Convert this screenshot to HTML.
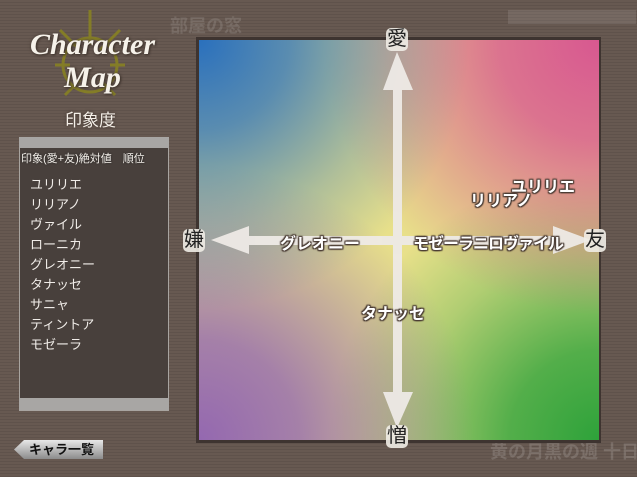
<!DOCTYPE html>
<html><head><meta charset="utf-8"><style>
body{margin:0;width:637px;height:477px;overflow:hidden;position:relative;font-family:"Liberation Sans","Noto Sans CJK JP",sans-serif;
background:#675951;background-image:repeating-linear-gradient(0deg,rgba(0,0,0,.08) 0 1px,transparent 1px 3px);}
.abs{position:absolute}
.title{color:#f6f2ea;font-family:"Liberation Serif",serif;font-weight:bold;text-align:center;text-shadow:0 0 3px #4a3e36,1px 1px 2px #3a302a}
.chart{left:196px;top:37px;width:405px;height:406px;background:#3e3430}
.grad{left:199px;top:40px;width:400px;height:400px;
background:radial-gradient(circle 300px at 0 0,#2a70bd 0,rgba(42,112,189,.75) 90px,rgba(42,112,189,.3) 190px,rgba(42,112,189,0) 270px),
radial-gradient(circle 300px at 100% 0,#d85890 0,rgba(216,88,144,.8) 100px,rgba(216,88,144,.35) 200px,rgba(216,88,144,0) 275px),
radial-gradient(circle 300px at 0 100%,#9468b0 0,rgba(148,104,176,.8) 100px,rgba(148,104,176,.35) 200px,rgba(148,104,176,0) 275px),
radial-gradient(circle 300px at 100% 100%,#2ea23a 0,rgba(46,162,58,.8) 90px,rgba(46,162,58,.3) 190px,rgba(46,162,58,0) 270px),#e8e08a}
.lbl{font-weight:bold;font-size:16px;color:#fff;text-shadow:0 0 2px #4a3c34,0 0 2px #4a3c34,1px 1px 1px #4a3c34,-1px -1px 1px #4a3c34,1px -1px 1px #4a3c34,-1px 1px 1px #4a3c34;white-space:nowrap}
.ax{font-size:20px;color:#222;background:rgba(240,236,230,.9);border-radius:5px;padding:0 1px;line-height:23px}
.list div{color:#f0ece8;font-size:13px;height:20px}
</style></head><body>
<div class="abs" style="left:170px;top:12px;color:rgba(255,255,255,.12);font-size:18px;font-weight:bold">部屋の窓</div>
<div class="abs" style="left:508px;top:10px;width:128px;height:14px;background:rgba(255,255,255,.1);"></div>
<div class="abs" style="left:490px;top:438px;color:rgba(255,255,255,.15);font-size:18px;font-weight:bold;white-space:nowrap">黄の月黒の週 十日</div>
<svg class="abs" style="left:30px;top:5px" width="110" height="110" viewBox="0 0 110 110"><g fill="none" stroke="#8a8420" stroke-width="3" opacity=".85"><circle cx="60" cy="60" r="27"/><path d="M60 5 L60 40 M30 25 L50 45 M90 25 L70 45 M25 60 L40 60 M95 60 L80 60 M35 90 L50 75 M85 90 L70 75"/></g></svg>
<div class="abs title" style="left:20px;top:28px;width:145px;font-size:30px;line-height:33px;font-style:italic">Character<br>Map</div>
<div class="abs" style="left:65px;top:106px;color:#f4efe8;font-size:17px;text-shadow:0 0 3px #3a2e28">印象度</div>
<div class="abs" style="left:19px;top:137px;width:150px;height:274px;background:#48403c;border:1px solid #a8a4a0;box-sizing:border-box"></div>
<div class="abs" style="left:19px;top:137px;width:150px;height:11px;background:#a8a6a4"></div>
<div class="abs" style="left:19px;top:398px;width:150px;height:12px;background:#a8a6a4"></div>
<div class="abs" style="left:21px;top:150px;color:#f4f0ea;font-size:11px;text-shadow:0 0 2px #222">印象(愛+友)絶対値　順位</div>
<div class="abs list" style="left:30px;top:174px"><div>ユリリエ</div><div>リリアノ</div><div>ヴァイル</div><div>ローニカ</div><div>グレオニー</div><div>タナッセ</div><div>サニャ</div><div>ティントア</div><div>モゼーラ</div></div>
<div class="abs" style="left:14px;top:440px;width:89px;height:19px;background:linear-gradient(#e8e8e8,#8c8c8c);clip-path:polygon(10px 0,100% 0,100% 100%,10px 100%,0 50%);font-weight:bold;font-size:13px;color:#111;text-align:center;line-height:19px;padding-left:6px;box-sizing:border-box">キャラ一覧</div>
<div class="abs chart"></div>
<div class="abs grad"></div>
<svg class="abs" style="left:199px;top:40px" width="400" height="400"><g fill="#eeeae6" opacity=".95">
<rect x="194" y="48" width="9" height="310"/><rect x="48" y="196" width="310" height="9"/>
<polygon points="198,12 184,50 214,50"/><polygon points="198,388 184,352 214,352"/>
<polygon points="12,200 50,186 50,214"/><polygon points="392,200 354,186 354,214"/></g></svg>
<div class="abs ax" style="left:386px;top:28px">愛</div>
<div class="abs ax" style="left:386px;top:425px">憎</div>
<div class="abs ax" style="left:183px;top:229px">嫌</div>
<div class="abs ax" style="left:584px;top:229px">友</div>
<div class="abs lbl" style="left:511px;top:173px">ユリリエ</div>
<div class="abs lbl" style="left:470px;top:187px">リリアノ</div>
<div class="abs lbl" style="left:280px;top:230px">グレオニー</div>
<div class="abs lbl" style="left:413px;top:230px;letter-spacing:-1px">モゼーラニロヴァイル</div>
<div class="abs lbl" style="left:361px;top:300px">タナッセ</div>
</body></html>
